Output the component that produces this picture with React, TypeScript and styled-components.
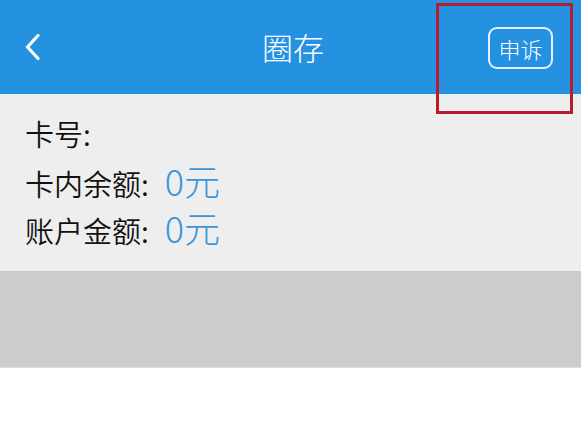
import React from "react";
import styled, { createGlobalStyle } from "styled-components";

const Global = createGlobalStyle`
  html, body { margin: 0; padding: 0; background: #ffffff; }
  body { font-family: "Noto Sans CJK SC", "Noto Sans", sans-serif; }
  * { box-sizing: border-box; }
`;

const Page = styled.div`
  position: relative;
  width: 581px;
  height: 426px;
  display: flex;
  flex-direction: column;
  background: #ffffff;
  overflow: hidden;
`;

const Header = styled.div`
  height: 94px;
  background: #2491e1;
  display: grid;
  grid-template-columns: 100px 1fr 100px;
  align-items: center;
  padding: 0 22px 0 27px;
`;

const Back = styled.div`
  display: flex;
  align-items: center;
  height: 30px;
  margin-left: -2px;
`;

const Title = styled.div`
  text-align: center;
  color: #ffffff;
  font-size: 31px;
  font-weight: 300;
  line-height: 1;
  margin-top: -2px;
`;

const Right = styled.div`
  display: flex;
  justify-content: flex-end;
  padding-right: 6px;
`;

const Appeal = styled.div`
  width: 65px;
  height: 42px;
  border: 2px solid #e6f3ff;
  border-radius: 9px;
  color: #ffffff;
  font-size: 22px;
  font-weight: 300;
  display: flex;
  align-items: center;
  justify-content: center;
  line-height: 1;
  margin-top: 2px;
`;

const Info = styled.div`
  background: #eeeeee;
  height: 177px;
  padding: 16px 0 0 25px;
  display: flex;
  flex-direction: column;
`;

const Row = styled.div`
  display: flex;
  align-items: baseline;
  height: 47px;
  line-height: 47px;
`;

const Label = styled.span`
  font-size: 29px;
  font-weight: 350;
  color: #111111;
`;

const Value = styled.span`
  font-size: 36px;
  font-weight: 300;
  color: #3a96dc;
  margin-left: 16px;
`;

const Band = styled.div`
  height: 97px;
  background: #cccccc;
  border-bottom: 1px solid #dcdcdc;
`;

const Annotation = styled.div`
  position: absolute;
  left: 436px;
  top: 3px;
  width: 137px;
  height: 111px;
  border: 3px solid #b81a30;
  pointer-events: none;
`;

export default function App() {
  return (
    <>
      <Global />
      <Page>
        <Header>
          <Back>
            <svg width="16" height="26" viewBox="0 0 16 26">
              <polyline
                points="13,1.5 2.5,13 13,24.5"
                fill="none"
                stroke="#ffffff"
                strokeWidth="3.2"
                strokeLinecap="round"
                strokeLinejoin="round"
              />
            </svg>
          </Back>
          <Title>圈存</Title>
          <Right>
            <Appeal>申诉</Appeal>
          </Right>
        </Header>
        <Info>
          <Row>
            <Label>卡号:</Label>
          </Row>
          <Row>
            <Label>卡内余额:</Label>
            <Value>0元</Value>
          </Row>
          <Row>
            <Label>账户金额:</Label>
            <Value>0元</Value>
          </Row>
        </Info>
        <Band />
        <Annotation />
      </Page>
    </>
  );
}
